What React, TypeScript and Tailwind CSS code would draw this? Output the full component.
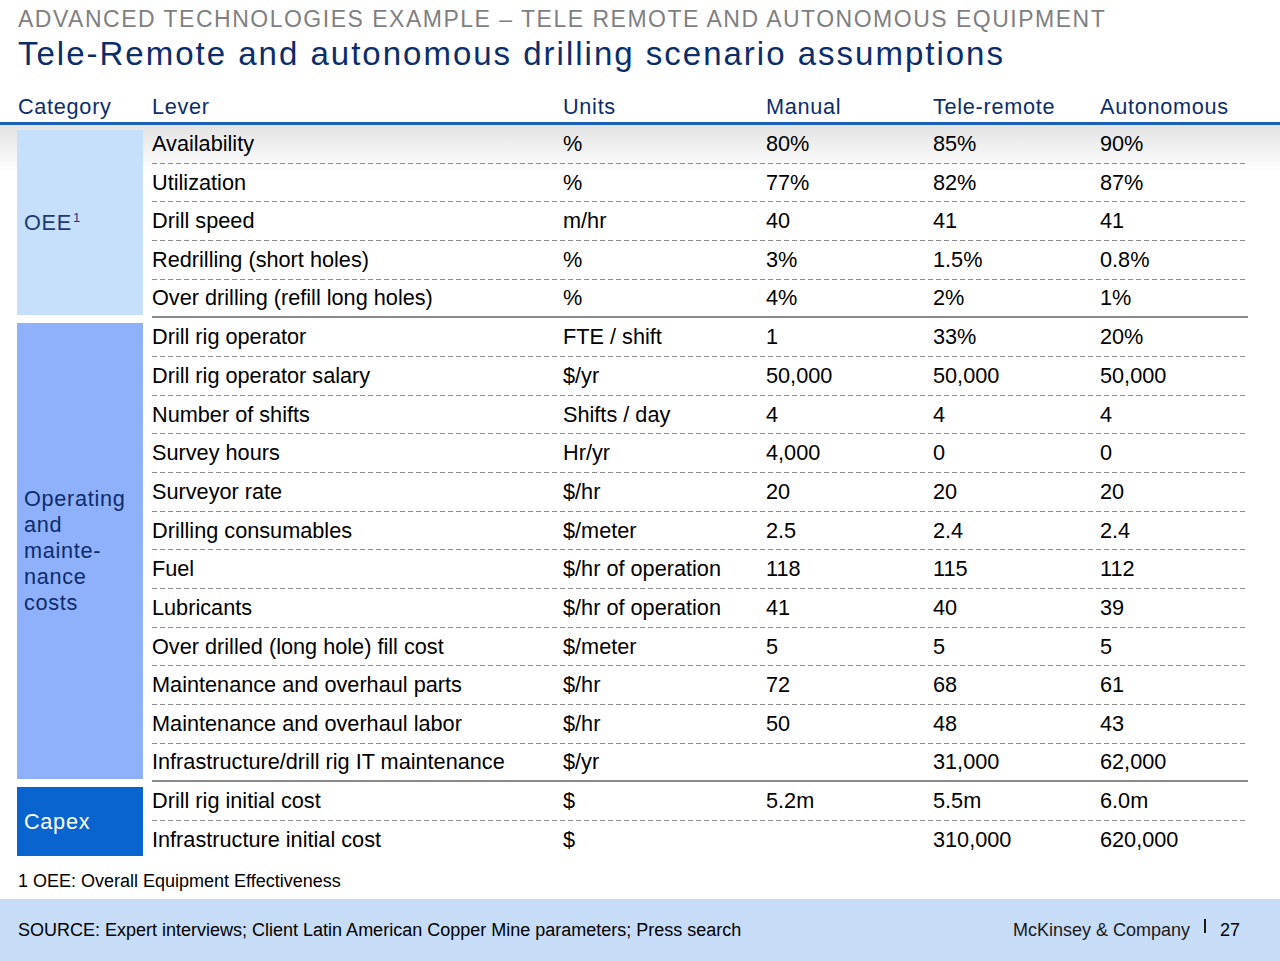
type Row = { lever: string; units: string; manual: string; tele: string; auto: string };

const GROUPS: { label: React.ReactNode; box: string; text: string; rows: Row[] }[] = [
  {
    label: (
      <>
        OEE<sup className="text-[13px] relative top-[-8px] ml-[1px]">1</sup>
      </>
    ),
    box: "bg-[#c6dffa]",
    text: "text-[#1b3a78]",
    rows: [
      { lever: "Availability", units: "%", manual: "80%", tele: "85%", auto: "90%" },
      { lever: "Utilization", units: "%", manual: "77%", tele: "82%", auto: "87%" },
      { lever: "Drill speed", units: "m/hr", manual: "40", tele: "41", auto: "41" },
      { lever: "Redrilling (short holes)", units: "%", manual: "3%", tele: "1.5%", auto: "0.8%" },
      { lever: "Over drilling (refill long holes)", units: "%", manual: "4%", tele: "2%", auto: "1%" },
    ],
  },
  {
    label: (
      <>
        Operating
        <br />
        and
        <br />
        mainte-
        <br />
        nance
        <br />
        costs
      </>
    ),
    box: "bg-[#8fb0fa]",
    text: "text-[#0c2c6c]",
    rows: [
      { lever: "Drill rig operator", units: "FTE / shift", manual: "1", tele: "33%", auto: "20%" },
      { lever: "Drill rig operator salary", units: "$/yr", manual: "50,000", tele: "50,000", auto: "50,000" },
      { lever: "Number of shifts", units: "Shifts / day", manual: "4", tele: "4", auto: "4" },
      { lever: "Survey hours", units: "Hr/yr", manual: "4,000", tele: "0", auto: "0" },
      { lever: "Surveyor rate", units: "$/hr", manual: "20", tele: "20", auto: "20" },
      { lever: "Drilling consumables", units: "$/meter", manual: "2.5", tele: "2.4", auto: "2.4" },
      { lever: "Fuel", units: "$/hr of operation", manual: "118", tele: "115", auto: "112" },
      { lever: "Lubricants", units: "$/hr of operation", manual: "41", tele: "40", auto: "39" },
      { lever: "Over drilled (long hole) fill cost", units: "$/meter", manual: "5", tele: "5", auto: "5" },
      { lever: "Maintenance and overhaul parts", units: "$/hr", manual: "72", tele: "68", auto: "61" },
      { lever: "Maintenance and overhaul labor", units: "$/hr", manual: "50", tele: "48", auto: "43" },
      { lever: "Infrastructure/drill rig IT maintenance", units: "$/yr", manual: "", tele: "31,000", auto: "62,000" },
    ],
  },
  {
    label: "Capex",
    box: "bg-[#0a64d0]",
    text: "text-white",
    rows: [
      { lever: "Drill rig initial cost", units: "$", manual: "5.2m", tele: "5.5m", auto: "6.0m" },
      { lever: "Infrastructure initial cost", units: "$", manual: "", tele: "310,000", auto: "620,000" },
    ],
  },
];

const DASH =
  "bg-[repeating-linear-gradient(to_right,#8c8c8c_0_5px,transparent_5px_8px)] bg-no-repeat bg-bottom bg-[length:100%_1px]";

export default function App() {
  return (
    <div className="w-[1280px] h-[961px] bg-white flex flex-col overflow-hidden font-['Liberation_Sans',Arial,sans-serif]">
      {/* Titles */}
      <div className="px-[18px] pt-[4px]">
        <p className="text-[23px] leading-[30px] text-[#7f7f7f] tracking-[1.5px] whitespace-nowrap">
          ADVANCED TECHNOLOGIES EXAMPLE – TELE REMOTE AND AUTONOMOUS EQUIPMENT
        </p>
        <h1 className="text-[33px] leading-[40px] text-[#0b2d6b] tracking-[2px] whitespace-nowrap">
          Tele-Remote and autonomous drilling scenario assumptions
        </h1>
      </div>

      {/* Column headers */}
      <div className="flex items-center mt-[16px] h-[32px] pt-[3px] pl-[18px] text-[21.7px] text-[#0b2d6b] tracking-[0.7px]">
        <div className="w-[134px]">Category</div>
        <div className="w-[411px]">Lever</div>
        <div className="w-[203px]">Units</div>
        <div className="w-[167px]">Manual</div>
        <div className="w-[167px]">Tele-remote</div>
        <div>Autonomous</div>
      </div>
      <div className="h-[3px] bg-[#1a5fb8]" />

      {/* Table body */}
      <div className="bg-[linear-gradient(to_bottom,#e3e3e3,#ffffff_48px)]">
        {GROUPS.map((g, gi) => (
          <div key={gi} className="flex">
            <div className="w-[126px] ml-[17px] mr-[9px] pt-[5px] pb-[3px] flex">
              <div className={`flex-1 flex items-center px-[7px] text-[21.7px] leading-[26px] tracking-[0.7px] ${g.box} ${g.text}`}>
                <div>{g.label}</div>
              </div>
            </div>
            <div className="w-[1096px]">
              {g.rows.map((r, ri) => {
                const last = ri === g.rows.length - 1;
                const line = last ? (gi < GROUPS.length - 1 ? "border-b-2 border-[#8a8a8a]" : "") : DASH;
                return (
                  <div key={ri} className={`h-[38.67px] flex items-center text-[21.7px] text-black whitespace-nowrap ${line}`}>
                    <div className="w-[411px]">{r.lever}</div>
                    <div className="w-[203px]">{r.units}</div>
                    <div className="w-[167px]">{r.manual}</div>
                    <div className="w-[167px]">{r.tele}</div>
                    <div>{r.auto}</div>
                  </div>
                );
              })}
            </div>
          </div>
        ))}
      </div>

      {/* Footnote */}
      <p className="px-[18px] mt-[12px] text-[18px] leading-[20px] text-black">
        1 OEE: Overall Equipment Effectiveness
      </p>

      {/* Footer */}
      <div className="mt-auto h-[62px] bg-[#c7dcf7] flex items-center justify-between pl-[18px] pr-[40px] text-[18px] text-black">
        <span>SOURCE: Expert interviews; Client Latin American Copper Mine parameters; Press search</span>
        <span className="flex items-center">
          <span className="text-[#1a1a1a]">McKinsey &amp; Company</span>
          <span className="mx-[14px] w-[2px] h-[14px] bg-[#1a1a1a] relative top-[-4px]" />
          <span>27</span>
        </span>
      </div>
    </div>
  );
}
